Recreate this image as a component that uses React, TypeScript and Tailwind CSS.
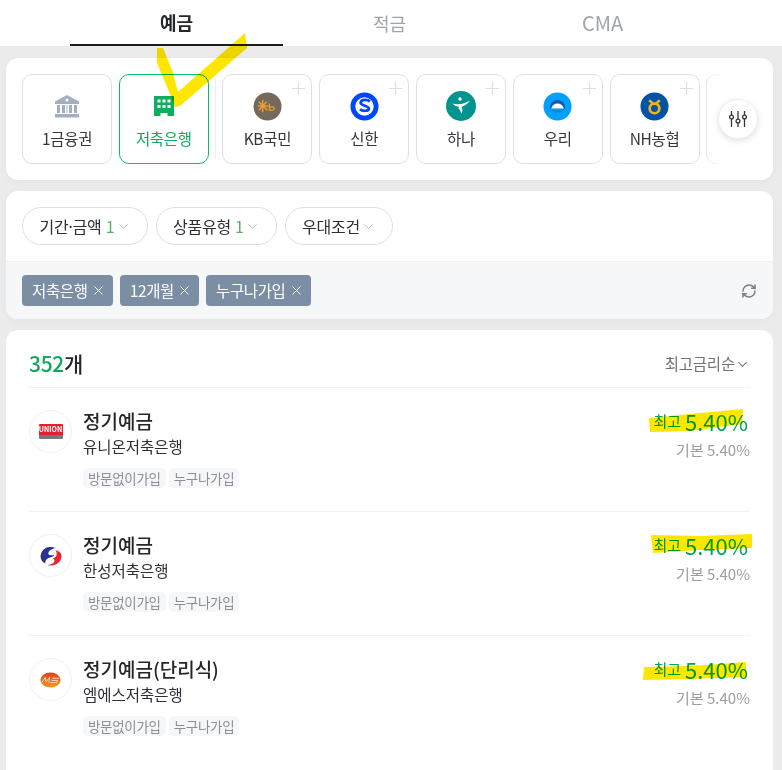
import { ChevronDown, RefreshCw, X } from "lucide-react";
import type { ReactNode } from "react";

const FONT = { fontFamily: '"Noto Sans CJK KR", "Noto Sans", sans-serif' };

const BankIcon = () => (
  <svg viewBox="0 0 24 24" className="h-[24px] w-[24px]">
    <path d="M12 1 L24 7.500V10H0V7.500Z" fill="#a3afbf" />
    <circle cx="12" cy="6" r="1.500" fill="#fff" />
    <path d="M2 11h3v8H2ZM7 11h3v8H7ZM14 11h3v8h-3ZM19 11h3v8h-3ZM11.500 11h1v8h-1Z" fill="#a3afbf" />
    <path d="M0 20h24v3.500H0Z" fill="#a3afbf" />
  </svg>
);

const SlidersIcon = () => (
  <svg viewBox="0 0 18 18" className="h-[18px] w-[18px]" fill="none" stroke="#33363d" strokeWidth="1.300">
    <path d="M2.500 1v4M2.500 9v8M9 1v8M9 13v4M15.500 1v4M15.500 9v8" />
    <circle cx="2.500" cy="7" r="1.900" />
    <circle cx="9" cy="11" r="1.900" />
    <circle cx="15.500" cy="7" r="1.900" />
  </svg>
);

const KbLogo = () => (
  <svg viewBox="0 0 30 30" className="h-[29px] w-[29px]">
    <circle cx="15" cy="15" r="14.500" fill="#75695c" />
    <path d="M10 8v13M5 14.500h11M6 10l9 9M6 19l8-9" stroke="#e9a12b" strokeWidth="1.500" fill="none" />
    <path d="M17 12v6.500c2 1 5 .5 5-1.500s-3-2-5-.5" stroke="#e9a12b" strokeWidth="1.300" fill="none" />
  </svg>
);

const ShinhanLogo = () => (
  <svg viewBox="0 0 30 30" className="h-[29px] w-[29px]">
    <circle cx="15" cy="15" r="14.500" fill="#0046ff" />
    <circle cx="15" cy="15" r="9.500" fill="#fff" />
    <path d="M20.500 10c-2-2.500-9-2.500-9.500 1-.4 3.300 8.800 3 8.600 6.200-.2 2.900-7 2.800-9.300.6" stroke="#0046ff" strokeWidth="2.800" fill="none" />
  </svg>
);

const HanaLogo = () => (
  <svg viewBox="0 0 30 30" className="h-[30px] w-[30px]">
    <circle cx="15" cy="15" r="15" fill="#009490" />
    <circle cx="14" cy="8" r="1.700" fill="#fff" />
    <path d="M6.500 12.500c6 1.500 12 .5 17.500-3-3 4.500-6.500 5.500-8.500 6.500 1.500 2.500 1 5-.5 7 0-2.500-1-4.500-3-6 .7-.3 1.200-.6 1.500-1-2.500-.3-5.500-1.500-7-3.500Z" fill="#fff" />
  </svg>
);

const WooriLogo = () => (
  <svg viewBox="0 0 30 30" className="h-[29px] w-[29px]">
    <circle cx="15" cy="15" r="14.500" fill="#00a0ff" />
    <path d="M7 17a8 9 0 0 1 16 0Z" fill="#0a5fa8" />
    <path d="M8.500 17c1-3.500 3.500-5 6.500-5s5.500 1.500 6.500 5Z" fill="#fff" />
    <path d="M8 18h14a7.500 5 0 0 1-14 0Z" fill="#1388d8" />
  </svg>
);

const NhLogo = () => (
  <svg viewBox="0 0 30 30" className="h-[29px] w-[29px]">
    <circle cx="15" cy="15" r="14.500" fill="#0053a5" />
    <circle cx="15" cy="17" r="5" fill="none" stroke="#f5b21b" strokeWidth="2.800" />
    <path d="M9.500 8.500l4 3.500M20.500 8.500l-4 3.500" stroke="#f5b21b" strokeWidth="2.600" />
  </svg>
);

const UnionLogo = () => (
  <div className="flex w-[24px] flex-col overflow-hidden rounded-[1px]">
    <div className="flex h-[11px] items-center justify-center bg-[#e4202c] text-[7px] leading-none font-bold text-white">
      UNION
    </div>
    <div className="h-[4px] bg-[#77777b]" />
  </div>
);

const HansungLogo = () => (
  <svg viewBox="0 0 24 24" className="h-[24px] w-[24px]">
    <path d="M12 3A9.500 9.500 0 0 0 1.500 12c0 3.500 2 6.500 5 7.500-1-3 1.500-5.500 6-6.500 1.500-.4 2.500-1 2.500-2-2 .6-4.500.5-5.500-.8C8.500 8.500 11 5 16.500 4 15 3.300 13.500 3 12 3Z" fill="#27338f" />
    <path d="M22.500 12c0 5-4.500 9.500-10.500 9.500-1.500 0-2.500-.2-3.500-.6 4-.2 7-2 7-4.400 0-1-.7-1.800-2-2.300 3-.6 4.200-2 4.200-4.500 0-1.700-.7-3-1.400-3.700 3.500 1 6.200 2.700 6.200 6Z" fill="#e8242f" />
  </svg>
);

const MsLogo = () => (
  <svg viewBox="0 0 24 18" className="h-[18px] w-[21px]">
    <defs>
      <linearGradient id="msFill" x1="0" y1="0" x2="0" y2="1">
        <stop offset="0" stopColor="#d9431f" />
        <stop offset="1" stopColor="#f39a1d" />
      </linearGradient>
    </defs>
    <ellipse cx="12" cy="9" rx="11.500" ry="8.500" fill="url(#msFill)" />
    <path d="M2 12l4-6 1 5 4-5-1 6M14 7h8M13 9.500h7l-1 2.500h-7" stroke="#fff" strokeWidth="1" fill="none" opacity="0.8" />
  </svg>
);

const banks: { name: string; logo: ReactNode }[] = [
  { name: "KB국민", logo: <KbLogo /> },
  { name: "신한", logo: <ShinhanLogo /> },
  { name: "하나", logo: <HanaLogo /> },
  { name: "우리", logo: <WooriLogo /> },
  { name: "NH농협", logo: <NhLogo /> },
];

const products: { title: string; bank: string; logo: ReactNode }[] = [
  { title: "정기예금", bank: "유니온저축은행", logo: <UnionLogo /> },
  { title: "정기예금", bank: "한성저축은행", logo: <HansungLogo /> },
  { title: "정기예금(단리식)", bank: "엠에스저축은행", logo: <MsLogo /> },
];

const BankCell = ({
  name,
  icon,
  active,
  plus,
}: {
  name: string;
  icon: ReactNode;
  active?: boolean;
  plus?: boolean;
}) => (
  <div
    className={[
      "relative flex h-[90px] w-[90px] shrink-0 flex-col items-center rounded-[10px] border bg-white",
      active ? "border-[#00c25f]" : "border-[#e0e0e0]",
    ].join(" ")}
  >
    {plus ? (
      <svg viewBox="0 0 13 13" className="absolute top-[7px] right-[6px] h-[13px] w-[13px]">
        <path d="M6.500 0v13M0 6.500h13" stroke="#dedede" strokeWidth="1.200" />
      </svg>
    ) : null}
    <div className="mt-[16px] flex h-[30px] items-center justify-center">{icon}</div>
    <span
      className={[
        "mt-[4px] text-[15.500px] leading-[26px] tracking-[-0.3px]",
        active ? "text-[#12a95f]" : "text-[#33363d]",
      ].join(" ")}
    >
      {name}
    </span>
  </div>
);

const FilterChip = ({ label, count, width }: { label: ReactNode; count?: string; width: string }) => (
  <div className={`flex h-[38px] items-center justify-center rounded-full border border-[#e0e0e0] bg-white ${width}`}>
    <span className="text-[16px] tracking-[-0.2px] text-[#2c2f36]">{label}</span>
    {count ? <span className="ml-[4px] text-[16px] text-[#5cae62]">{count}</span> : null}
    <ChevronDown className="ml-[1px] h-[15px] w-[15px] text-[#b4b4b4]" strokeWidth={1.500} />
  </div>
);

const AppliedTag = ({ label }: { label: string }) => (
  <div className="flex h-[31px] items-center gap-[3px] rounded-[4px] bg-[#7b8ea3] pr-[7px] pl-[10px] text-white">
    <span className="text-[15.500px] tracking-[-0.35px]">{label}</span>
    <X className="h-[15px] w-[15px]" strokeWidth={1.500} />
  </div>
);

const ProductRow = ({ title, bank, logo, last }: { title: string; bank: string; logo: ReactNode; last?: boolean }) => (
  <div className={["flex h-[124px] items-start pt-[19px]", last ? "" : "border-b border-[#f0f0f0]"].join(" ")}>
    <div className="mt-[3px] flex h-[43px] w-[43px] shrink-0 items-center justify-center rounded-full border border-[#f0f0f0] bg-white">
      {logo}
    </div>
    <div className="ml-[11px] flex-1">
      <div className="text-[19px] leading-[28px] font-medium text-[#24262b]">{title}</div>
      <div className="mt-[1px] text-[15.500px] leading-[20px] text-[#2c2f36]">{bank}</div>
      <div className="mt-[12px] flex gap-[3px]">
        <span className="flex h-[20px] items-center rounded-[5px] bg-[#f6f7f9] px-[5px] text-[13.500px] tracking-[-0.3px] text-[#8b8f97]">
          방문없이가입
        </span>
        <span className="flex h-[20px] items-center rounded-[5px] bg-[#f6f7f9] px-[5px] text-[13.500px] tracking-[-0.3px] text-[#8b8f97]">
          누구나가입
        </span>
      </div>
    </div>
    <div className="flex flex-col items-end">
      <div className="flex h-[29px] items-center pr-[2px] text-[#00a651]">
        <span className="mr-[4px] text-[15px]">최고</span>
        <span className="text-[22px]">5.40%</span>
      </div>
      <div className="mt-[2px] text-[15px] leading-[24px] text-[#9a9da3]">기본 5.40%</div>
    </div>
  </div>
);

export default function App() {
  return (
    <div className="relative h-[770px] w-[782px] overflow-hidden bg-[#ebebeb]" style={FONT}>
      <div className="flex h-[46px] bg-white pl-[70px]">
        <div className="flex h-[46px] w-[213px] items-center justify-center border-b-2 border-[#1c1c1e] text-[18px] font-bold text-[#24262b]">
          예금
        </div>
        <div className="flex h-[46px] w-[213px] items-center justify-center text-[18px] text-[#a0a4ab]">
          적금
        </div>
        <div className="flex h-[46px] w-[213px] items-center justify-center text-[20px] text-[#a0a4ab]">
          CMA
        </div>
      </div>

      <div className="ml-[6px] flex w-[767px] flex-col pt-[12px]">
        <section className="relative overflow-hidden rounded-[12px] bg-white p-[16px] shadow-[0_2px_8px_rgba(0,0,0,0.03)]">
          <div className="flex items-center gap-[6.800px] overflow-hidden">
            <BankCell name="1금융권" icon={<BankIcon />} />
            <BankCell
              name="저축은행"
              active
              icon={
                <svg viewBox="0 0 20 20" className="h-[20px] w-[20px]">
                  <path fillRule="evenodd" d="M0 0h20v20h-6.500v-3h-7v3H0Z M3.500 3.500v3h3v-3Z M8.500 3.500v3h3v-3Z M13.500 3.500v3h3v-3Z M3.500 9v3h3V9Z M8.500 9v3h3V9Z M13.500 9v3h3V9Z" fill="#0fae5f" />
                </svg>
              }
            />
            <div className="-ml-[1px] h-[80px] w-px shrink-0 bg-[#eeeeee]" />
            {banks.map((bank) => (
              <BankCell key={bank.name} name={bank.name} icon={bank.logo} plus />
            ))}
            <BankCell name="" icon={null} />
          </div>
          <div className="absolute top-[16px] right-0 h-[90px] w-[70px] bg-gradient-to-r from-white/0 via-white via-30% to-white" />
          <div className="absolute top-[41px] right-[15px] flex h-[40px] w-[40px] items-center justify-center rounded-full border border-[#f0f0f0] bg-white shadow-[0_2px_6px_rgba(0,0,0,0.12)]">
            <SlidersIcon />
          </div>
        </section>

        <section className="mt-[11px] overflow-hidden rounded-[12px] bg-white shadow-[0_2px_8px_rgba(0,0,0,0.03)]">
          <div className="flex gap-[8px] px-[16px] pt-[16px] pb-[16px]">
            <FilterChip
              label={
                <>
                  기간<span className="font-['Noto_Sans']">·</span>금액
                </>
              }
              count="1"
              width="w-[126px]"
            />
            <FilterChip label="상품유형" count="1" width="w-[121px]" />
            <FilterChip label="우대조건" width="w-[108px]" />
          </div>
          <div className="flex h-[58px] items-center justify-between border-t border-[#eff0f2] bg-[#f6f7f9] pr-[16px] pl-[16px]">
            <div className="flex gap-[7px]">
              <AppliedTag label="저축은행" />
              <AppliedTag label="12개월" />
              <AppliedTag label="누구나가입" />
            </div>
            <RefreshCw className="h-[16px] w-[16px] text-[#7d8087]" strokeWidth={2.300} />
          </div>
        </section>

        <section className="mt-[11px] h-[460px] rounded-t-[12px] bg-white px-[23px]">
          <div className="flex h-[58px] items-center justify-between border-b border-[#f0f0f0] pt-[11px]">
            <div className="text-[21px] font-medium tracking-[-0.3px] text-[#24262b]">
              <span className="text-[#12a95f]">352</span>개
            </div>
            <div className="flex items-center text-[#70737a]">
              <span className="text-[15.500px] tracking-[-0.2px]">최고금리순</span>
              <ChevronDown className="h-[15px] w-[15px]" strokeWidth={1.800} />
            </div>
          </div>
          {products.map((product, index) => (
            <ProductRow key={product.bank} {...product} last={index === products.length - 1} />
          ))}
        </section>
      </div>

      {/* hand-drawn marker annotations on top of the screenshot */}
      <svg viewBox="0 0 782 770" className="pointer-events-none absolute top-0 left-0 h-[770px] w-[782px] mix-blend-multiply">
        <path d="M157 48 L163 48 L172 70 L178 92 L245 33 L247 48 L180 106 L175 107 L170 94 L157 63 Z" fill="#ffe600" />
        <path d="M649 418 L690 414 L743 409 L742 424 L690 431 L650 432 Z" fill="#ffe600" />
        <path d="M651 535 L700 536 L752 534 L752 548 L700 550 L653 553 Z" fill="#ffe600" />
        <path d="M644 667 L690 666 L746 662 L746 677 L690 679 L643 680 Z" fill="#ffe600" />
      </svg>
    </div>
  );
}
